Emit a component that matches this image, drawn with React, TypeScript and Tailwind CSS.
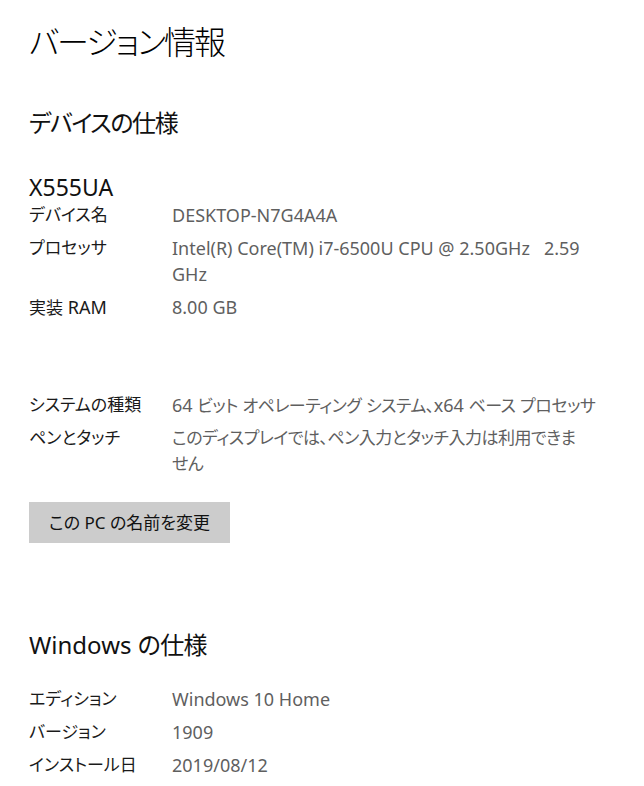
import React from "react";

const font = "[font-family:'Noto_Sans','Noto_Sans_CJK_JP',sans-serif] [font-feature-settings:'palt']";

// Japanese runs and Latin runs get their own size, so the mix reads like Segoe UI + Yu Gothic UI
const cjkRe = /([\u3000-\u30ff\u4e00-\u9fff\uff00-\uffef]+)/;

function Mixed({ text, cjk, latin }: { text: string; cjk: string; latin: string }) {
  return (
    <>
      {text.split(cjkRe).filter(Boolean).map((part, i) => (
        <span key={i} className={cjkRe.test(part) ? cjk : latin}>
          {part}
        </span>
      ))}
    </>
  );
}

type Row = { label: string; lines: string[] };

const device: Row[] = [
  { label: "デバイス名", lines: ["DESKTOP-N7G4A4A"] },
  { label: "プロセッサ", lines: ["Intel(R) Core(TM) i7-6500U CPU @ 2.50GHz   2.59", "GHz"] },
  { label: "実装 RAM", lines: ["8.00 GB"] },
];

const system: Row[] = [
  { label: "システムの種類", lines: ["64 ビット オペレーティング システム、x64 ベース プロセッサ"] },
  { label: "ペンとタッチ", lines: ["このディスプレイでは、ペン入力とタッチ入力は利用できま", "せん"] },
];

const windows: Row[] = [
  { label: "エディション", lines: ["Windows 10 Home"] },
  { label: "バージョン", lines: ["1909"] },
  { label: "インストール日", lines: ["2019/08/12"] },
];

function SpecRows({ rows }: { rows: Row[] }) {
  return (
    <div className="flex flex-col gap-[7px]">
      {rows.map((r) => (
        <div key={r.label} className="flex text-[17px] leading-[26px]">
          <div className="h-[26px] w-[143px] shrink-0 text-[#1a1a1a]">
            <Mixed text={r.label} cjk="" latin="text-[18px]" />
          </div>
          <div className="flex flex-col text-[#5f5f5f]">
            {r.lines.map((l) => (
              <div key={l} className="h-[26px] whitespace-pre">
                <Mixed text={l} cjk="tracking-[-0.03em]" latin="text-[18px]" />
              </div>
            ))}
          </div>
        </div>
      ))}
    </div>
  );
}

export default function App() {
  return (
    <div className={`min-h-screen bg-white pl-[29px] pt-[20px] ${font}`}>
      <h1 className="h-[44px] text-[32px] leading-[44px] font-light tracking-[-0.06em] text-black">
        バージョン情報
      </h1>

      <h2 className="mt-[43px] h-[32px] text-[24px] leading-[32px] text-[#111]">
        <Mixed text="デバイスの仕様" cjk="tracking-[-0.06em]" latin="" />
      </h2>
      <div className="mt-[33px] h-[30px] text-[23px] leading-[30px] text-[#111]">X555UA</div>
      <SpecRows rows={device} />

      <div className="mt-[72px]">
        <SpecRows rows={system} />
      </div>

      <button className="mt-[25px] h-[41px] w-[201px] bg-[#cccccc] text-[17px] text-[#111]">
        この PC の名前を変更
      </button>

      <h2 className="mt-[86px] h-[32px] text-[24px] leading-[32px] text-[#111]">
        <Mixed text="Windows の仕様" cjk="tracking-[-0.03em]" latin="" />
      </h2>
      <div className="mt-[25px]">
        <SpecRows rows={windows} />
      </div>
    </div>
  );
}
